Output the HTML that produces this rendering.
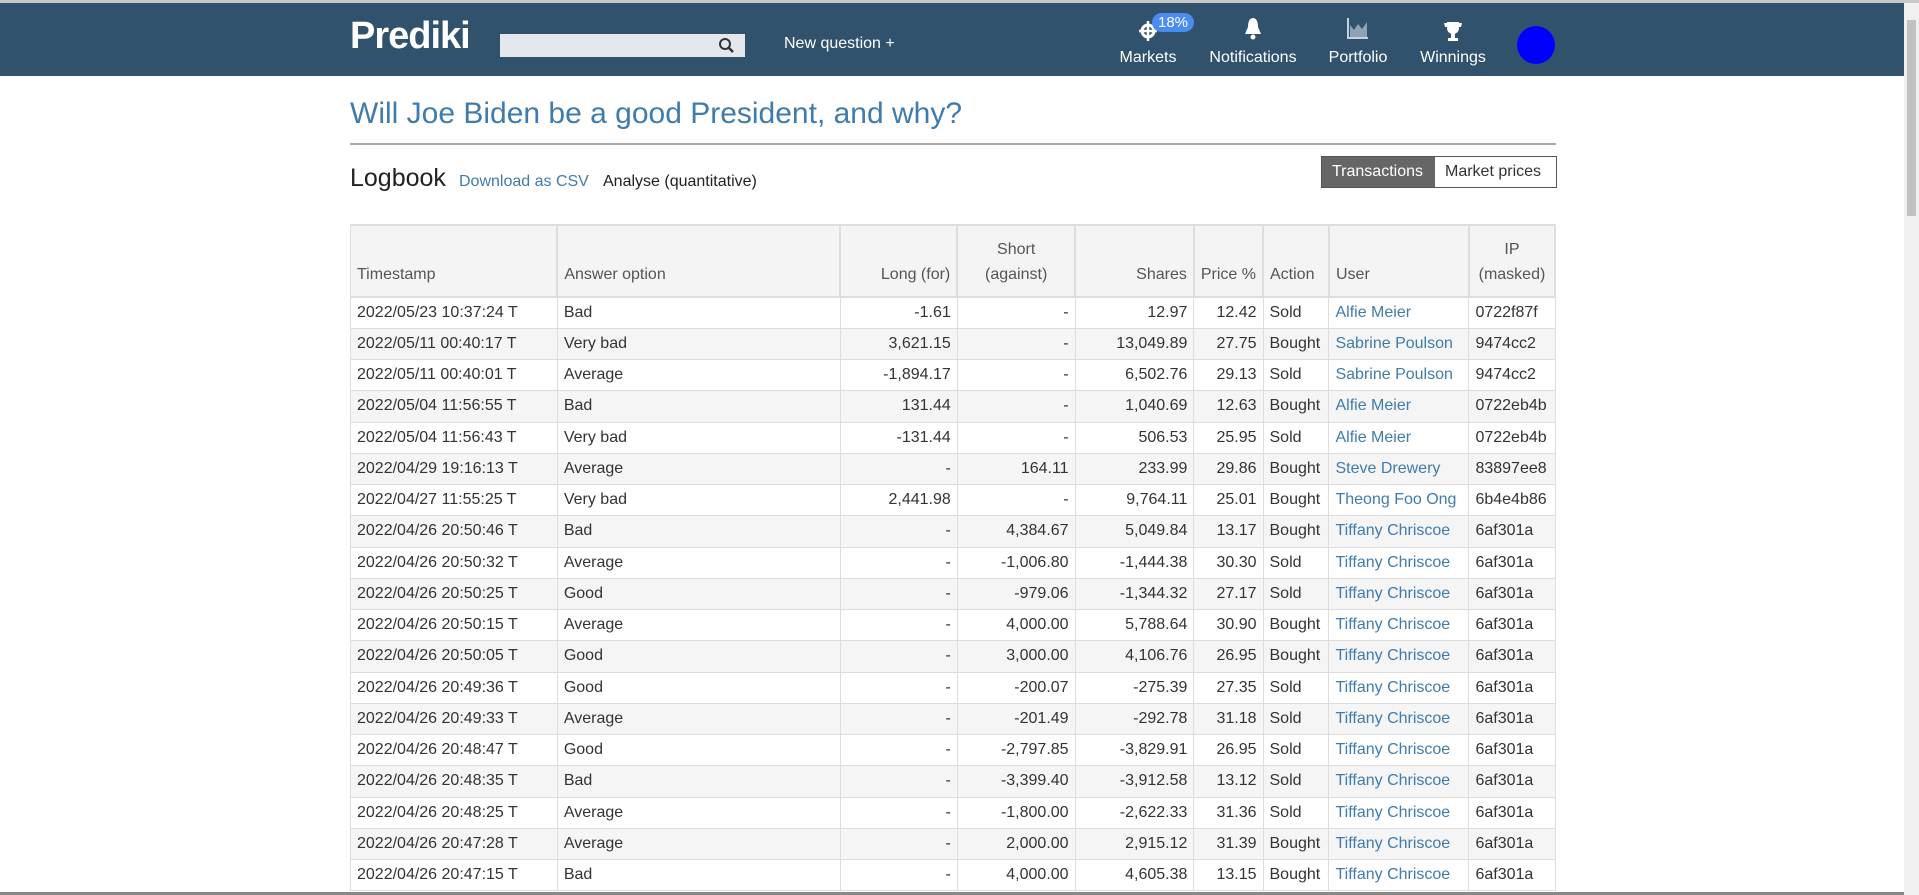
<!DOCTYPE html>
<html style="overflow:hidden;height:895px"><head><meta charset="utf-8"><style>
*{box-sizing:border-box}
body{margin:0;width:1919px;height:895px;overflow:hidden;font-family:"Liberation Sans",Arial,sans-serif;color:#333;background:#fff;position:relative}
.top{position:absolute;left:0;top:0;width:1919px;height:3px;background:#c8c8c8}
.nav{position:absolute;left:0;top:3px;width:1904px;height:73px;background:#31526c;color:#fff}
.logo{position:absolute;left:350px;top:12px;font-size:38px;font-weight:bold;letter-spacing:-1px;color:#fff}
.search{position:absolute;left:500px;top:31px;width:245px;height:23px;background:#e4e8ec}
.newq{position:absolute;left:784px;top:32px;font-size:16px}
.item{position:absolute;top:46px;font-size:16px;transform:translateX(-50%);white-space:nowrap}
.ic{position:absolute;top:14px;transform:translateX(-50%)}
.badge{position:absolute;left:1152px;top:10px;background:#4a8cf0;border-radius:10px;font-size:15px;padding:1px 6px;color:#fff}
.avatar{position:absolute;left:1517px;top:23px;width:38px;height:38px;border-radius:50%;background:#0000ff}
.sb{position:absolute;left:1904px;top:3px;width:15px;height:892px;background:#f0f0f0}
.sb div{position:absolute;left:3px;top:17px;width:9px;height:196px;background:#c1c1c1}
h1{position:absolute;left:350px;top:97px;margin:0;font-weight:normal;font-size:30px;color:#3f7cad}
.hr{position:absolute;left:350px;top:143px;width:1206px;height:2px;background:#aaa}
.lb{position:absolute;left:350px;top:164px;font-size:25px;color:#222}
.dl{position:absolute;left:459px;top:173px;font-size:16px;color:#3f7cad}
.an{position:absolute;left:603px;top:173px;font-size:16px;color:#222}
.btns{position:absolute;left:1321px;top:156px;height:32px;display:flex;border:1px solid #555;font-size:16px}
.btns div{padding:0 10px;line-height:30px}
.b1{background:#666;color:#fff;width:113px}
.b2{background:#fff;color:#333;width:121px}
.wrap{position:absolute;left:0;top:0;width:1919px;height:892px;overflow:hidden}
table{position:absolute;left:350px;top:224px;width:1206px;border-collapse:collapse;font-size:16px}
td,th{border:1px solid #ddd;padding:0 6px;white-space:nowrap}
th{font-weight:normal;color:#555;background:#f4f4f4;height:72px;vertical-align:bottom;padding-bottom:8px;text-align:left;border-width:2px 2px 2px 1px;line-height:1.6}
th.r,td.r{text-align:right}
th.c{text-align:center}
tr{height:31.26px}
tbody tr:nth-child(even){background:#f5f5f5}
a{color:#3f7cad;text-decoration:none}
.bot{position:absolute;left:0;top:892px;width:1904px;height:3px;background:#888}
</style></head><body>
<div class="top"></div>
<div class="nav">
<div class="logo">Prediki</div>
<div class="search"><svg style="position:absolute;right:10px;top:3px" width="17" height="17" viewBox="0 0 17 17"><circle cx="7" cy="7" r="5" fill="none" stroke="#333" stroke-width="2"/><line x1="10.5" y1="10.5" x2="15" y2="15" stroke="#333" stroke-width="2.5"/></svg></div>
<div class="newq">New question +</div>
<svg class="ic" style="left:1148px;top:17px" width="20" height="22" viewBox="0 0 20 22"><circle cx="10" cy="11" r="6" fill="none" stroke="#fff" stroke-width="3"/><path d="M10 1v20M1 11h18" stroke="#fff" stroke-width="2.5"/></svg>
<div class="badge">18%</div>
<div class="item" style="left:1148px">Markets</div>
<svg class="ic" style="left:1253px" width="20" height="24" viewBox="0 0 20 24"><path d="M10 1c-4 0-5 5-5 9l-3 7h16l-3-7c0-4-1-9-5-9z" fill="#fff"/><circle cx="10" cy="20" r="2.5" fill="#fff"/></svg>
<div class="item" style="left:1253px">Notifications</div>
<svg class="ic" style="left:1358px" width="22" height="22" viewBox="0 0 22 22"><path d="M1 1v20h20" stroke="#c8d2dc" stroke-width="2" fill="none"/><path d="M3 20V8l4 5 4-6 4 5 5-7v15z" fill="#8fa3b5"/></svg>
<div class="item" style="left:1358px">Portfolio</div>
<svg class="ic" style="left:1453px;top:18px" width="20" height="22" viewBox="0 0 20 22"><path d="M4 1h12v6c0 4-3 6-6 6s-6-2-6-6z M1 2h3v4H2z M19 2h-3v4h2z" fill="#fff"/><rect x="8" y="12" width="4" height="5" fill="#fff"/><rect x="5" y="17" width="10" height="3" fill="#fff"/></svg>
<div class="item" style="left:1453px">Winnings</div>
<div class="avatar"></div>
</div>
<div class="sb"><div></div></div>
<h1>Will Joe Biden be a good President, and why?</h1>
<div class="hr"></div>
<div class="lb">Logbook</div>
<div class="dl">Download as CSV</div>
<div class="an">Analyse (quantitative)</div>
<div class="btns"><div class="b1">Transactions</div><div class="b2">Market prices</div></div>
<div class="wrap">
<table>
<colgroup><col style="width:207px"><col style="width:284px"><col style="width:117px"><col style="width:118px"><col style="width:119px"><col style="width:69px"><col style="width:66px"><col style="width:140px"><col style="width:86px"></colgroup>
<thead><tr><th>Timestamp</th><th>Answer option</th><th class="r">Long (for)</th><th class="c">Short<br>(against)</th><th class="r">Shares</th><th class="r">Price %</th><th>Action</th><th>User</th><th class="c">IP<br>(masked)</th></tr></thead>
<tbody>
<tr><td>2022/05/23 10:37:24 T</td><td>Bad</td><td class="r">-1.61</td><td class="r">-</td><td class="r">12.97</td><td class="r">12.42</td><td>Sold</td><td><a>Alfie Meier</a></td><td>0722f87f</td></tr>
<tr><td>2022/05/11 00:40:17 T</td><td>Very bad</td><td class="r">3,621.15</td><td class="r">-</td><td class="r">13,049.89</td><td class="r">27.75</td><td>Bought</td><td><a>Sabrine Poulson</a></td><td>9474cc2</td></tr>
<tr><td>2022/05/11 00:40:01 T</td><td>Average</td><td class="r">-1,894.17</td><td class="r">-</td><td class="r">6,502.76</td><td class="r">29.13</td><td>Sold</td><td><a>Sabrine Poulson</a></td><td>9474cc2</td></tr>
<tr><td>2022/05/04 11:56:55 T</td><td>Bad</td><td class="r">131.44</td><td class="r">-</td><td class="r">1,040.69</td><td class="r">12.63</td><td>Bought</td><td><a>Alfie Meier</a></td><td>0722eb4b</td></tr>
<tr><td>2022/05/04 11:56:43 T</td><td>Very bad</td><td class="r">-131.44</td><td class="r">-</td><td class="r">506.53</td><td class="r">25.95</td><td>Sold</td><td><a>Alfie Meier</a></td><td>0722eb4b</td></tr>
<tr><td>2022/04/29 19:16:13 T</td><td>Average</td><td class="r">-</td><td class="r">164.11</td><td class="r">233.99</td><td class="r">29.86</td><td>Bought</td><td><a>Steve Drewery</a></td><td>83897ee8</td></tr>
<tr><td>2022/04/27 11:55:25 T</td><td>Very bad</td><td class="r">2,441.98</td><td class="r">-</td><td class="r">9,764.11</td><td class="r">25.01</td><td>Bought</td><td><a>Theong Foo Ong</a></td><td>6b4e4b86</td></tr>
<tr><td>2022/04/26 20:50:46 T</td><td>Bad</td><td class="r">-</td><td class="r">4,384.67</td><td class="r">5,049.84</td><td class="r">13.17</td><td>Bought</td><td><a>Tiffany Chriscoe</a></td><td>6af301a</td></tr>
<tr><td>2022/04/26 20:50:32 T</td><td>Average</td><td class="r">-</td><td class="r">-1,006.80</td><td class="r">-1,444.38</td><td class="r">30.30</td><td>Sold</td><td><a>Tiffany Chriscoe</a></td><td>6af301a</td></tr>
<tr><td>2022/04/26 20:50:25 T</td><td>Good</td><td class="r">-</td><td class="r">-979.06</td><td class="r">-1,344.32</td><td class="r">27.17</td><td>Sold</td><td><a>Tiffany Chriscoe</a></td><td>6af301a</td></tr>
<tr><td>2022/04/26 20:50:15 T</td><td>Average</td><td class="r">-</td><td class="r">4,000.00</td><td class="r">5,788.64</td><td class="r">30.90</td><td>Bought</td><td><a>Tiffany Chriscoe</a></td><td>6af301a</td></tr>
<tr><td>2022/04/26 20:50:05 T</td><td>Good</td><td class="r">-</td><td class="r">3,000.00</td><td class="r">4,106.76</td><td class="r">26.95</td><td>Bought</td><td><a>Tiffany Chriscoe</a></td><td>6af301a</td></tr>
<tr><td>2022/04/26 20:49:36 T</td><td>Good</td><td class="r">-</td><td class="r">-200.07</td><td class="r">-275.39</td><td class="r">27.35</td><td>Sold</td><td><a>Tiffany Chriscoe</a></td><td>6af301a</td></tr>
<tr><td>2022/04/26 20:49:33 T</td><td>Average</td><td class="r">-</td><td class="r">-201.49</td><td class="r">-292.78</td><td class="r">31.18</td><td>Sold</td><td><a>Tiffany Chriscoe</a></td><td>6af301a</td></tr>
<tr><td>2022/04/26 20:48:47 T</td><td>Good</td><td class="r">-</td><td class="r">-2,797.85</td><td class="r">-3,829.91</td><td class="r">26.95</td><td>Sold</td><td><a>Tiffany Chriscoe</a></td><td>6af301a</td></tr>
<tr><td>2022/04/26 20:48:35 T</td><td>Bad</td><td class="r">-</td><td class="r">-3,399.40</td><td class="r">-3,912.58</td><td class="r">13.12</td><td>Sold</td><td><a>Tiffany Chriscoe</a></td><td>6af301a</td></tr>
<tr><td>2022/04/26 20:48:25 T</td><td>Average</td><td class="r">-</td><td class="r">-1,800.00</td><td class="r">-2,622.33</td><td class="r">31.36</td><td>Sold</td><td><a>Tiffany Chriscoe</a></td><td>6af301a</td></tr>
<tr><td>2022/04/26 20:47:28 T</td><td>Average</td><td class="r">-</td><td class="r">2,000.00</td><td class="r">2,915.12</td><td class="r">31.39</td><td>Bought</td><td><a>Tiffany Chriscoe</a></td><td>6af301a</td></tr>
<tr><td>2022/04/26 20:47:15 T</td><td>Bad</td><td class="r">-</td><td class="r">4,000.00</td><td class="r">4,605.38</td><td class="r">13.15</td><td>Bought</td><td><a>Tiffany Chriscoe</a></td><td>6af301a</td></tr>
</tbody></table>
</div>
<div class="bot"></div>
</body></html>
